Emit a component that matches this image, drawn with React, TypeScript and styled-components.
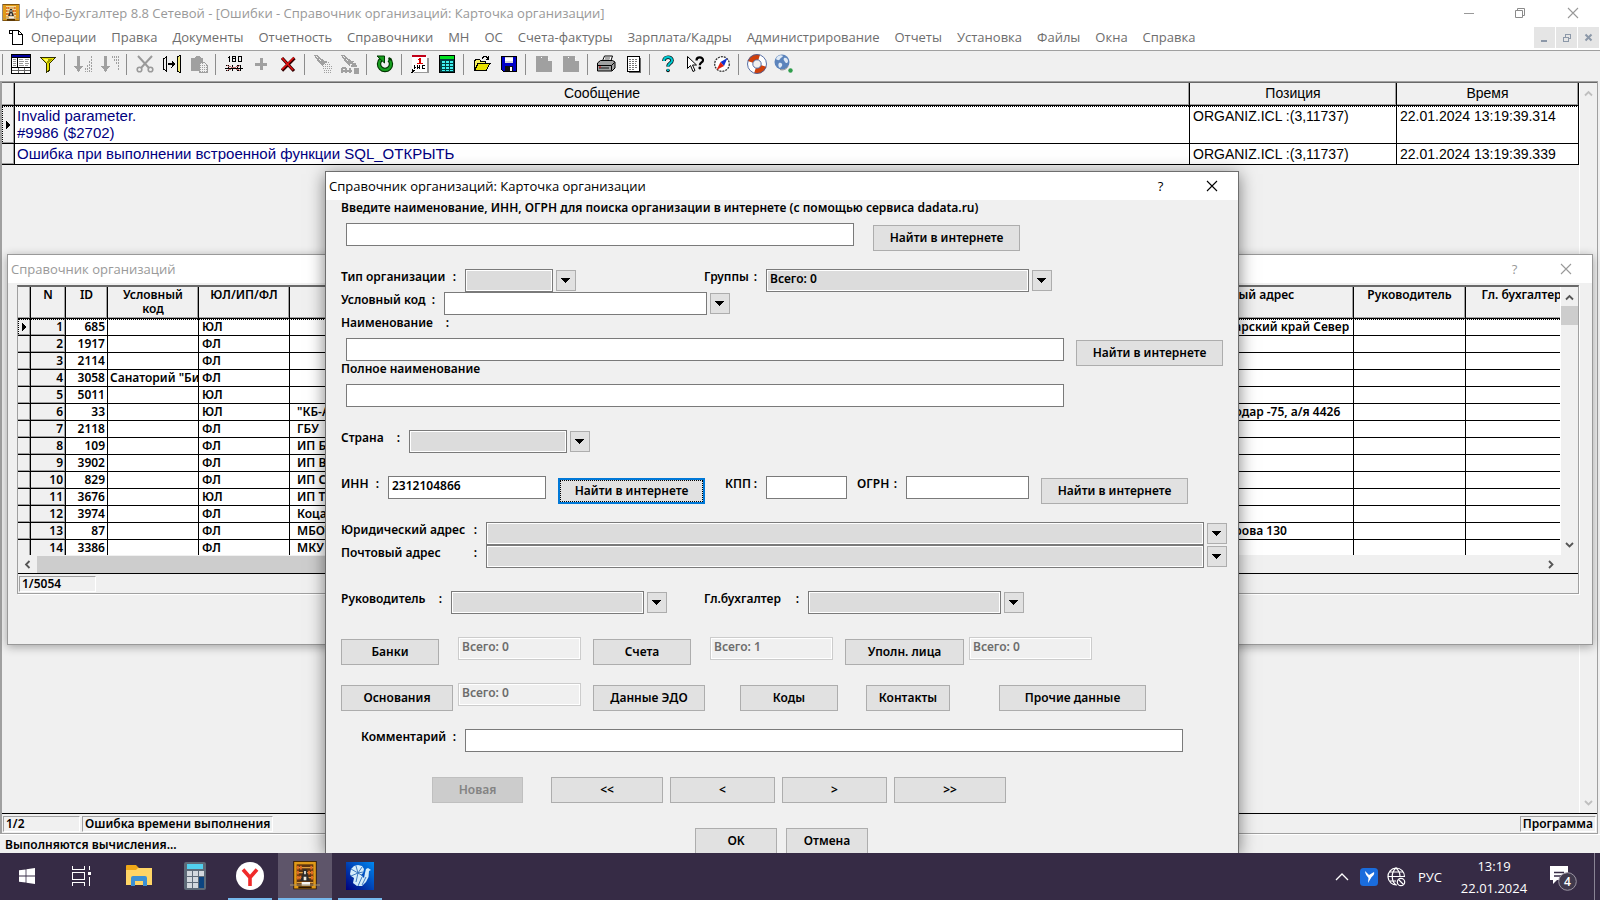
import React from 'react';
import styled, { createGlobalStyle, css } from 'styled-components';

const UI = '"Open Sans", "Noto Sans", sans-serif';
const BOLD = '"Noto Sans", "Open Sans", sans-serif';
const GRID = '"Liberation Sans", Arial, sans-serif';

const GlobalStyle = createGlobalStyle`
  *, *::before, *::after { box-sizing: border-box; }
  html, body { margin: 0; height: 100%; overflow: hidden; }
  #root { height: 100%; }
  button, input, select { margin: 0; font: inherit; color: inherit; border-radius: 0; }
`;

/* ---------- shell ---------- */

const Desktop = styled.div`
  display: flex;
  flex-direction: column;
  height: 100vh;
  background: #f0f0f0;
  color: #000;
  font: 600 12px/16px ${BOLD};
`;

const AppWindow = styled.div`
  position: relative;
  flex: 1;
  min-height: 0;
  display: flex;
  flex-direction: column;
  overflow: hidden;
`;

const TitleBar = styled.header`
  display: flex;
  align-items: center;
  height: 26px;
  padding-left: 2px;
  background: #fff;
  color: #999;
  font: 400 13px/18px ${UI};
`;

const TitleText = styled.h1<{ $gap?: number }>`
  flex: 1;
  margin: 0 0 0 ${(p) => p.$gap ?? 0}px;
  font: inherit;
  white-space: nowrap;
`;

const CaptionButton = styled.button<{ $w?: number }>`
  display: flex;
  align-items: center;
  justify-content: center;
  width: ${(p) => p.$w ?? 51}px;
  height: 24px;
  padding: 0;
  border: 0;
  background: transparent;
`;

const MenuBar = styled.nav`
  display: flex;
  align-items: center;
  height: 25px;
  padding: 0 0 2px 8px;
  border-bottom: 1px solid #a0a0a0;
  background: #fff;
  color: #6d6d6d;
  font: 400 13px/18px ${UI};
`;

const MenuList = styled.div`
  display: flex;
  flex: 1;
  gap: 15px;
  margin-left: 7px;
`;

const MenuItem = styled.button`
  padding: 0;
  border: 0;
  background: transparent;
  white-space: nowrap;
`;

const MdiButton = styled.button`
  display: flex;
  align-items: center;
  justify-content: center;
  width: 21px;
  height: 21px;
  margin-right: 1px;
  padding: 0;
  border: 0;
  background: #e5e5e5;
`;

const ToolBar = styled.div`
  display: flex;
  align-items: center;
  height: 30px;
  padding-bottom: 4px;
`;

const ToolButton = styled.button`
  display: flex;
  align-items: center;
  justify-content: center;
  width: 27px;
  height: 24px;
  padding: 0 2px 0 0;
  border: 0;
  background: transparent;
`;

const Separator = styled.i`
  width: 8px;
  height: 21px;
  background: linear-gradient(#8c8c8c, #8c8c8c) 2px 0 / 1px 100% no-repeat;
`;

const Workspace = styled.main`
  position: relative;
  flex: 1;
  min-height: 0;
  display: flex;
  flex-direction: column;
  margin-right: 2px;
  border: solid #a0a0a0;
  border-width: 1px 1px 1px 2px;
  box-shadow: inset 0 1px #696969;
  padding-top: 1px;
`;

const StatusLine = styled.footer`
  height: 19px;
  padding: 2px 5px 0;
  border-top: 1px solid #fff;
`;

const StatusStrip = styled.div`
  display: flex;
  justify-content: space-between;
  height: 20px;
  padding: 2px 1px 2px 1px;
  border-top: 1px solid #000;
`;

const StatusGroup = styled.div`
  display: flex;
  gap: 2px;
`;

const StatusCell = styled.div<{ $w?: number }>`
  width: ${(p) => (p.$w ? `${p.$w}px` : 'auto')};
  height: 16px;
  padding: 0 2px;
  border: 1px solid #a0a0a0;
  border-right-color: #fff;
  border-bottom-color: #fff;
  line-height: 14px;
  white-space: nowrap;
`;

/* ---------- grids ---------- */

const GridArea = styled.div`
  flex: 1;
  min-height: 0;
  display: flex;
`;

const GridViewport = styled.div`
  flex: 1;
  min-width: 0;
  overflow: hidden;
`;

const VScroll = styled.div`
  display: flex;
  flex-direction: column;
  align-items: center;
  width: 18px;
  padding: 6px 0;
  border-left: 1px solid #fff;
`;

const VThumb = styled.div`
  width: 17px;
  height: 19px;
  margin-top: 4px;
  background: #cdcdcd;
`;

const Fill = styled.div`
  flex: 1;
`;

const ErrorTable = styled.table`
  width: 100%;
  table-layout: fixed;
  border-collapse: separate;
  border-spacing: 0;
  font: 400 14px/17px ${GRID};

  th, td {
    padding: 2px 3px 0;
    border: solid #000;
    border-width: 0 1px 1px 0;
    text-align: left;
    vertical-align: top;
    white-space: pre;
  }
  th {
    height: 23px;
    background: #f0f0f0;
    font-weight: 400;
    text-align: center;
    box-shadow: inset -1px -1px #a0a0a0;
  }
  td { background: #fff; }
`;

const handleCell = css`
  &&& {
    padding: 0;
    background: #f0f0f0;
    box-shadow: inset -1px -1px #a0a0a0;
    text-align: center;
    vertical-align: middle;
  }
`;

const HandleCell = styled.td`
  ${handleCell}
`;

const ErrorRow = styled.tr<{ $h: number; $current?: boolean }>`
  height: ${(p) => p.$h}px;
  ${(p) =>
    p.$current &&
    css`
      outline: 1px dotted #000;
      outline-offset: -1px;
    `}
`;

const Message = styled.td`
  &&& {
    padding-top: 1px;
    padding-left: 2px;
  }
  color: #000080;
  font-size: 15px;
`;

const OrgTable = styled.table`
  width: calc(100% + 18px);
  table-layout: fixed;
  border-collapse: separate;
  border-spacing: 0;

  th, td {
    height: 17px;
    padding: 0 3px;
    border: solid #000;
    border-width: 0 1px 1px 0;
    text-align: left;
    vertical-align: top;
    white-space: nowrap;
    overflow: hidden;
  }
  th {
    height: 32px;
    padding: 1px 0 0;
    background: #f0f0f0;
    box-shadow: inset -1px -1px #a0a0a0;
    font-weight: 600;
    line-height: 14px;
    text-align: center;
    white-space: pre;
  }
  td { background: #fff; }
  td:nth-child(4) { padding: 0 0 0 2px; }
  td:nth-child(6) { padding-left: 7px; }
`;

const OrgRow = styled.tr<{ $current?: boolean }>`
  ${(p) =>
    p.$current &&
    css`
      outline: 1px dotted #000;
      outline-offset: -1px;
    `}
`;

const NumberCell = styled.td<{ $fixed?: boolean }>`
  &&& {
    padding-right: 2px;
    text-align: right;
    ${(p) => p.$fixed && 'background: #f0f0f0; box-shadow: inset -1px -1px #a0a0a0;'}
  }
`;

/* ---------- MDI child ---------- */

const ChildWindow = styled.section`
  position: absolute;
  top: 172px;
  left: 5px;
  right: 4px;
  height: 391px;
  display: flex;
  flex-direction: column;
  border: 1px solid #999;
  background: #f0f0f0;
  box-shadow: 0 2px 9px rgba(0, 0, 0, 0.32);
`;

const ChildTitle = styled.header`
  display: flex;
  align-items: center;
  height: 28px;
  padding: 0 1px 0 3px;
  background: #fff;
  color: #999;
  font: 400 13px/18px ${UI};
`;

const ChildFrame = styled.div`
  display: flex;
  flex-direction: column;
  height: 309px;
  margin: 2px 13px 0 9px;
  border: 1px solid #a0a0a0;
  border-top: 2px solid #696969;
  box-shadow: 1px 1px #fff;
`;

const HScroll = styled.div`
  display: flex;
  align-items: center;
  height: 18px;
  padding: 0 23px 0 5px;
`;

const HThumb = styled.div`
  width: 700px;
  height: 17px;
  margin: 0 auto 0 5px;
  background: #cdcdcd;
`;

/* ---------- dialog ---------- */

const Dialog = styled.section`
  position: absolute;
  top: 171px;
  left: 325px;
  bottom: 0;
  width: 914px;
  border: 1px solid #6e6e6e;
  border-bottom: 0;
  background: #f0f0f0;
  box-shadow: 0 3px 16px rgba(0, 0, 0, 0.5);
  overflow: hidden;
`;

const DialogTitle = styled.header`
  display: flex;
  align-items: center;
  height: 28px;
  padding: 0 1px 0 3px;
  background: #fff;
  font: 400 13px/18px ${UI};
`;

const Form = styled.form`
  padding-left: 15px;
`;

const Row = styled.div<{ $skip?: number; $indent?: number }>`
  display: flex;
  align-items: flex-start;
  height: 23px;
  margin-top: ${(p) => (p.$skip ?? 0) * 23}px;
  padding-left: ${(p) => p.$indent ?? 0}px;
  white-space: nowrap;
`;

const Footer = styled(Row)`
  margin-top: 28px;
`;

const Caption = styled.label<{ $w?: number; $gap?: number }>`
  display: flex;
  justify-content: space-between;
  width: ${(p) => (p.$w ? `${p.$w}px` : 'auto')};
  margin-left: ${(p) => p.$gap ?? 0}px;
  padding-right: 9px;
  line-height: 16px;
`;

const TextInput = styled.input<{ $w: number; $gap?: number }>`
  width: ${(p) => p.$w}px;
  height: 23px;
  margin-left: ${(p) => p.$gap ?? 0}px;
  padding: 0 3px 4px;
  border: 1px solid #7a7a7a;
  background: #fff;
  outline: 0;

  &:disabled {
    border-color: #ccc;
    background: #f0f0f0;
    box-shadow: inset 0 0 0 1px #fff;
    color: #6d6d6d;
  }
`;

const PickField = styled.select<{ $w: number }>`
  appearance: none;
  width: ${(p) => p.$w}px;
  height: 23px;
  padding: 0 3px 4px;
  border: 1px solid #7a7a7a;
  background: #dcdcdc;
  box-shadow: inset 0 0 0 1px #fff;
  outline: 0;
`;

const PickButton = styled.button`
  display: flex;
  align-items: center;
  justify-content: center;
  width: 20px;
  height: 21px;
  margin: 1px 0 0 3px;
  padding: 0 1px 0 0;
  border: 1px solid #adadad;
  background: #e1e1e1;
`;

const PushButton = styled.button<{ $w: number; $gap?: number; $focused?: boolean }>`
  flex: none;
  width: ${(p) => p.$w}px;
  height: 26px;
  margin: 2px 0 0 ${(p) => p.$gap ?? 0}px;
  padding: 0;
  border: 1px solid #adadad;
  background: #e1e1e1;
  line-height: 16px;
  ${(p) =>
    p.$focused &&
    css`
      border: 2px solid #0078d7;
      outline: 1px dotted #000;
      outline-offset: -3px;
    `}

  &:disabled {
    border-color: #bfbfbf;
    background: #ccc;
    color: #838383;
  }
`;

/* ---------- task bar ---------- */

const TaskBar = styled.footer`
  display: flex;
  align-items: stretch;
  height: 47px;
  background: #362b45;
  color: #fff;
  font: 400 13px/22px ${UI};
`;

const TaskButton = styled.button<{ $active?: boolean; $running?: boolean; $w?: number }>`
  display: flex;
  align-items: center;
  justify-content: center;
  width: ${(p) => p.$w ?? 55}px;
  padding: 0 0 2px;
  border: 0;
  background: transparent;
  ${(p) =>
    p.$running &&
    css`
      background: linear-gradient(#76b9ed, #76b9ed) center bottom / ${p.$active ? '100%' : '44px'} 2px no-repeat
        ${p.$active ? '#5e556a' : 'transparent'};
    `}
`;

const Tray = styled.div`
  display: flex;
  align-items: center;
  margin-left: auto;
`;

const TrayButton = styled.button<{ $w: number }>`
  display: flex;
  align-items: center;
  justify-content: center;
  width: ${(p) => p.$w}px;
  height: 47px;
  padding: 0;
  border: 0;
  background: transparent;
`;

const Clock = styled.time`
  width: 86px;
  text-align: center;
`;

const ShowDesktop = styled.button`
  width: 6px;
  height: 47px;
  margin-left: 5px;
  padding: 0;
  border: 0;
  border-left: 1px solid #8a8494;
  background: transparent;
`;

/* ---------- icons ---------- */

type IconProps = { s?: number; h?: number; box?: string; crisp?: boolean; children: React.ReactNode };
const Icon = ({ s = 20, h, box, crisp, children }: IconProps) => (
  <svg width={s} height={h ?? s} viewBox={box ?? `0 0 ${s} ${h ?? s}`} fill="none" shapeRendering={crisp ? 'crispEdges' : 'auto'} aria-hidden>
    {children}
  </svg>
);

const Abacus = ({ s = 18, tall }: { s?: number; tall?: boolean }) => (
  <Icon s={s} box="0 0 18 18">
    <rect x={tall ? 2 : 0.5} y="0" width={tall ? 14 : 17} height="17" fill="#2a1400" />
    <rect x={tall ? 2.500 : 1} y="0.500" width={tall ? 13 : 16} height="16" fill="#e09a18" />
    <rect x="4" y="2" width="10" height="13" fill={tall ? '#5c3310' : '#f4dc9c'} />
    <path d="M4 4h10M4 7h10M4 10h10M4 13h10" stroke={tall ? '#e0a040' : '#b06010'} strokeWidth=".7" />
    <path d="M4.700 2.900v2.200M6.500 2.900v2.200M12.800 2.900v2.200M4.700 5.900v2.200M11.500 5.900v2.200M13.200 5.900v2.200M4.700 8.900v2.200M6.200 8.900v2.200M13.200 8.900v2.200" stroke="#e06a20" strokeWidth="1.200" />
    <path d="M8 5h2l.6 3.500L12 12H6l1.400-3.500z" fill="#2c2c2c" />
    <path d="M8.500 6h1v2h-1zM8.200 9.500h1.600v2H8.200z" fill="#f0ece0" />
    <path d="M7 12.600h5v2.200H7z" fill="#f4f4f4" />
    <path d="M0 14.400h18" stroke="#a8946c" strokeWidth=".6" />
    <path d="M5 15.800h8" stroke="#2a1400" strokeWidth="1.200" />
  </Icon>
);

const Minimize = () => <Icon s={12}><path d="M1 6.500h10" stroke="#999" /></Icon>;
const Restore = () => (
  <Icon s={12}><path d="M1.500 3.500h7v7h-7zM3.500 3.500v-2h7v7h-2" stroke="#8a8a8a" /></Icon>
);
const Close = ({ c = '#999' }: { c?: string }) => (
  <Icon s={12}><path d="M1 1l10 10M11 1L1 11" stroke={c} strokeWidth="1.100" /></Icon>
);

const PageIcon = () => (
  <Icon s={16} crisp>
    <path d="M5 1h6l4 4v10H4V4" fill="#fff" />
    <path d="M1.500 4v-2.500h9l4 4V15.500H4.500V1.500M10.500 1.500V5.500h4M1 4.500h3" stroke="#000" />
  </Icon>
);

const RowArrow = () => <Icon s={4} h={8} crisp><path d="M0 0l4 4-4 4z" fill="#000" /></Icon>;
const DownArrow = () => <Icon s={9} h={5} crisp><path d="M0 0h9L4.500 5z" fill="#000" /></Icon>;

const Chevron = ({ dir, c }: { dir: 'up' | 'down' | 'left' | 'right'; c: string }) => {
  const d = { up: 'M1 6.500L4.500 3 8 6.500', down: 'M1 3L4.500 6.500 8 3', left: 'M6.500 1L3 4.500 6.500 8', right: 'M3 1l3.500 3.500L3 8' }[dir];
  return <Icon s={9}><path d={d} stroke={c} strokeWidth="1.800" /></Icon>;
};

const TableIcon = () => (
  <Icon crisp>
    <path d="M.5.500h19v19H.5z" fill="#fff" stroke="#000" />
    <path d="M1 1h18v2H1z" fill="#0000a0" />
    <path d="M1 3.500h18M6.500 3v10M1 13.500h18" stroke="#000" />
    <path d="M1 16.500h18M7.500 14v5M13.500 14v5" stroke="#666" />
    <path d="M2 5.500h3M2 7.500h3M2 9.500h3M2 11.500h3M8 5.500h4M14 5.500h4M8 7.500h5M14 7.500h3M8 9.500h4M14 9.500h4M8 11.500h5M14 11.500h3" stroke="#999" />
  </Icon>
);

const Funnel = () => (
  <Icon s={18} crisp>
    <path d="M1.500 2.500h15l-6 6v7l-3 1.500v-8.500z" fill="#e8e000" stroke="#303000" />
    <path d="M4 4h10l-5 4z" fill="#a0a000" /><path d="M4 4h5l-1 4z" fill="#ffff60" />
  </Icon>
);

const Sort = ({ down }: { down?: boolean }) => (
  <Icon s={18} crisp>
    <path d="M3 1h3v10h3l-4.500 6L0 11h3z" fill="#a0a0a0" />
    <path
      d={down ? 'M11.500 1v2M13.500 1v5M15.500 1v8M17.500 1v15' : 'M11.500 13v4M13.500 10v7M15.500 6v11M17.500 1v16'}
      stroke="#a0a0a0"
      strokeDasharray="2 1"
    />
  </Icon>
);

const Scissors = () => (
  <Icon s={18}>
    <path d="M2 1l11 12M16 1L5 13" stroke="#9a9a9a" strokeWidth="2" />
    <circle cx="3.500" cy="14.500" r="2.300" stroke="#9a9a9a" strokeWidth="1.600" />
    <circle cx="14.500" cy="14.500" r="2.300" stroke="#9a9a9a" strokeWidth="1.600" />
  </Icon>
);

const Transfer = () => (
  <Icon s={18} crisp>
    <path d="M3.500 1.500L.5 4v10l3 2.500z" fill="#eee" stroke="#000" />
    <path d="M14.500 1.500L17 .5v17l-2.500-1.500z" fill="#f0e878" stroke="#000" />
    <path d="M5 9h4" stroke="#000" strokeWidth="2" /><path d="M8.500 5.500l4.500 3.500-4.500 3.500z" fill="#000" />
    <path d="M17.500 2v14" stroke="#000" strokeDasharray="1 1" />
  </Icon>
);

const Paste = () => (
  <Icon s={18} crisp>
    <path d="M1 3h3l2-2h3l2 2h2v13H1z" fill="#a0a0a0" />
    <path d="M9 7h6l3 3v8H9z" fill="#f0f0f0" />
    <path d="M10 8.500h4M10 10.500h7M10 12.500h7M10 14.500h7M10 16.500h7" stroke="#a0a0a0" strokeDasharray="1 1" />
    <path d="M9.500 7.500h5l3 3v7h-8z" stroke="#a0a0a0" />
  </Icon>
);

const Numbers = () => (
  <Icon crisp>
    <path d="M5.500 2v6M4 3.500h1M8.500 2.500h3v5h-3zM8 4.500h4M14.500 2.500h3v5h-3z" stroke="#000" />
    <path d="M2 11.500h3M4.500 11v6M2 14.500h3M2 16.500h3M8.500 11v6M7 14.500h4M13.500 11.500h3v5h-3z" stroke="#000" />
    <path d="M3 16.500l13-5M3 11.500l13 5" stroke="#c07070" />
    <path d="M1 14h18" stroke="#000" />
  </Icon>
);

const Plus = () => <Icon s={12} crisp><path d="M6 0v12M0 6h12" stroke="#a0a0a0" strokeWidth="3" /></Icon>;
const RedCross = () => (
  <Icon s={18}>
    <path d="M3 3l12 13M15.500 3L3 15.500" stroke="#300" strokeWidth="3.200" />
    <path d="M3 3l11 12M15 2.500L3 14.500" stroke="#e01010" strokeWidth="1.700" />
  </Icon>
);

const Torch = ({ text }: { text?: boolean }) => (
  <Icon s={20} crisp>
    <path d="M1 1l3 0 5 4 2 2 3 0-1 2-3 1 0 3-2-2-3-3z" fill="#a0a0a0" />
    <path d="M3 2l6 6" stroke="#f0f0f0" strokeDasharray="1 1" />
    {text ? (
      <path d="M2 19v-4l1-1h2l1 1v4M2 16.500h4M7 16.500h5M9.500 14v5M14.500 14v5M14 14.500h4v4h-4M14 16.500h4M12 9.500h4M11 11.500h6" stroke="#a0a0a0" strokeWidth="2" />
    ) : (
      <path d="M11 8.500h6M10 10.500h8M10 12.500h9M10 14.500h9M11 16.500h8M11 18.500h8" stroke="#a0a0a0" strokeDasharray="1 1" />
    )}
  </Icon>
);

const Refresh = () => (
  <Icon s={18}>
    <path d="M5 4.500a6 6 0 1 0 8 0" stroke="#003800" strokeWidth="4.400" />
    <path d="M5 4.500a6 6 0 1 0 8 0" stroke="#18a020" strokeWidth="2.200" />
    <path d="M1 1h7.500v7z" fill="#18a020" stroke="#003800" /><path d="M13 2l3 2-2 2-2-2z" fill="#003800" />
  </Icon>
);

const Calendar = () => (
  <Icon s={18} crisp>
    <path d="M1 1h15v16H1z" fill="#fff" /><path d="M1 0h14v2H1z" fill="#c00018" />
    <path d="M16.500 3v14.500H3" stroke="#999" strokeWidth="2" />
    <path d="M8 3h2v6H7V8h1V5H7V4h1z" fill="#d00" /><path d="M6 8h6v1H6z" fill="#d00" />
    <path d="M3 10v4M5 12h-2M6.500 10v4M8.500 10v4M6.500 12h2M11 10v4M11 10.500h3M11 13.500h3M1.500 14v3M3.500 15l-3 3" stroke="#000" />
  </Icon>
);

const CalcIcon = () => (
  <Icon s={18} crisp>
    <path d="M2 1h14v16H2z" fill="#004040" /><path d="M2 1h14v3H2z" fill="#00e020" />
    {[6, 9, 12].map((y) => [4, 8, 12].map((x) => <rect key={`${x}-${y}`} x={x} y={y} width="3" height="2" fill="#40f0f0" />))}
    <path d="M4 15.500h12" stroke="#40f0f0" strokeDasharray="3 1" /><path d="M1.500.500h15v17h-15z" stroke="#000" />
  </Icon>
);

const OpenFolder = () => (
  <Icon s={18} crisp>
    <path d="M1.500 15.500v-10l2-1h3l1 1.500h5V8" fill="#f8f060" stroke="#000" />
    <path d="M1.500 15.500L5 8.500h12l-4 7z" fill="#e8e000" stroke="#000" />
    <path d="M9 3.500c2-3 4-2.500 6 0M15.500 1v3h-3" stroke="#000" />
  </Icon>
);

const Floppy = () => (
  <Icon s={18} crisp>
    <path d="M1.500 1.500h15v15h-13l-2-2z" fill="#0000c8" stroke="#000" />
    <path d="M5 2h8v6H5z" fill="#d8d8d8" /><path d="M5 3h8v3H5z" fill="#fff" />
    <path d="M5 11h8v5H5z" fill="#101010" /><path d="M10 12h2v4h-2z" fill="#fff" />
  </Icon>
);

const GreyBlock = () => (
  <Icon s={18} crisp>
    <path d="M1 1h12v5h4v11H1z" fill="#a0a0a0" /><path d="M6 2h1v1H6zM13 3h1v1h-1z" fill="#fff" />
  </Icon>
);

const Printer = () => (
  <Icon s={20}>
    <path d="M6 8l2.500-6h8L14.500 8z" fill="#fff" stroke="#000" />
    <path d="M9 4h5M8.500 6h5" stroke="#555" />
    <path d="M1.500 9l3-2.500h12l2.500 1.500v6l-3 3H1.500z" fill="#a0a0a0" stroke="#000" />
    <path d="M1.500 11.500h14l3-3M15.500 11.500v5" stroke="#000" /><path d="M3 14h10" stroke="#404040" strokeWidth="1.500" />
    <path d="M3 13h2" stroke="#d00" />
  </Icon>
);

const ListPage = () => (
  <Icon s={18} crisp>
    <path d="M3.500 1.500h12v15h-12z" fill="#fff" stroke="#000" />
    <path d="M5 4.500h8M5 6.500h9M5 8.500h7M5 10.500h9M5 12.500h8M5 14.500h5" stroke="#777" strokeDasharray="2 1" />
    <path d="M16.500 3v14.500H5" stroke="#666" />
  </Icon>
);

const Question = () => (
  <Icon s={18}>
    <path d="M5 6c0-5 8-5 8-.5 0 3-4 2.500-4 6" stroke="#000" strokeWidth="3.600" />
    <path d="M5 6c0-5 8-5 8-.5 0 3-4 2.500-4 6" stroke="#00c8d0" strokeWidth="2.200" />
    <circle cx="9" cy="15.500" r="1.800" fill="#000" /><circle cx="9" cy="15.200" r="1.100" fill="#00c8d0" />
  </Icon>
);

const WhatsThis = () => (
  <Icon s={18}>
    <path d="M1.500 1.500v12l3-3 2.500 6 2-1-2.500-5.500h4z" fill="#fff" stroke="#000" />
    <path d="M10.500 5.500c0-4 6.500-4 6.500-.3 0 2.300-3.200 2.300-3.200 5" stroke="#000" strokeWidth="2.200" />
    <circle cx="13.800" cy="13" r="1.400" fill="#000" />
  </Icon>
);

const Compass = () => (
  <Icon s={18}>
    <circle cx="9" cy="9" r="7.300" fill="#fff" stroke="#333" strokeDasharray="2 1" strokeWidth="1.300" />
    <path d="M14.500 3L11 11 7.500 7z" fill="#1030d0" /><path d="M3.500 15L7.500 7l3.500 4z" fill="#e02010" />
  </Icon>
);

const LifeBuoy = () => (
  <Icon s={20}>
    <circle cx="10" cy="10" r="7" stroke="#fff" strokeWidth="5.500" />
    <circle cx="10" cy="10" r="7" stroke="#d0400c" strokeWidth="5.500" strokeDasharray="11 11" strokeDashoffset="-2" />
    <circle cx="10" cy="10" r="9.500" stroke="#44609c" strokeWidth=".9" />
    <circle cx="10" cy="10" r="4.200" stroke="#44609c" strokeWidth=".9" />
  </Icon>
);

const GlobeNet = () => (
  <Icon s={20}>
    <circle cx="8" cy="8" r="7.500" fill="#5c84bc" />
    <path d="M3 3c2-2 5-2 6-1-1 2-2 1-3 3s-3 1-4 0zM10 4c2-1 4 1 4 3s-2 3-3 1-2-2-1-4zM5 9c2-1 4 1 3 3l-2 2c-2-1-2-4-1-5z" fill="#dfeaf6" />
    <path d="M6 15.500c3 1 6 0 8-3" stroke="#888" /><circle cx="16.500" cy="16.500" r="2.200" fill="#2f9e4c" />
  </Icon>
);

const StartIcon = () => (
  <Icon s={16}><path d="M0 2.300L6.600 1.400v6.200H0zM7.400 1.300L16 0v7.600H7.400zM0 8.400h6.600v6.200L0 13.700zM7.400 8.400H16V16l-8.600-1.200z" fill="#fff" /></Icon>
);
const TaskView = () => (
  <Icon s={22} h={20} crisp>
    <path d="M1.500 0v3.500h12V0M1.500 6.500h12v7h-12zM1.500 20v-3.500h12V20M18.500 0v4M18.500 11v9" stroke="#fff" />
    <path d="M17 6h3v3h-3z" fill="#fff" />
  </Icon>
);
const Explorer = () => (
  <Icon s={26} h={21}>
    <path d="M0 1a1 1 0 0 1 1-1h9l3 3h12a1 1 0 0 1 1 1v16H0z" fill="#f0a818" />
    <path d="M0 5l10 0 2-2h14v17H0z" fill="#ffd566" />
    <path d="M5 21v-8a2 2 0 0 1 2-2h12a2 2 0 0 1 2 2v8h-4v-5H9v5z" fill="#3c90d4" />
  </Icon>
);
const TaskCalc = () => (
  <Icon s={22} h={28}>
    <rect width="22" height="28" rx="2" fill="#5e6a78" /><rect x="3" y="2" width="16" height="5" fill="#52d0ee" />
    {[9, 15, 21].map((y) => [3, 9, 15].map((x) => (
      <rect key={`${x}-${y}`} x={x} y={y} width="5" height="5" fill="#d3d8de" />
    )))}
    <rect x="15" y="15" width="5" height="11" fill="#0c4480" />
  </Icon>
);
const Yandex = () => (
  <Icon s={28}>
    <circle cx="14" cy="14" r="14" fill="#fff" />
    <path d="M7 7.500l7 8 7-8M14 15v9" stroke="#f02a2a" strokeWidth="3.600" />
  </Icon>
);
const Bird = () => (
  <Icon s={28}>
    <defs><linearGradient id="sky" x1="0" y1="1" x2="1" y2="0"><stop stopColor="#00007c" /><stop offset="1" stopColor="#0088f0" /></linearGradient></defs>
    <rect width="28" height="28" fill="url(#sky)" />
    <path d="M4 12L5 7l3-3 4-1 4 1 2 3-1 4-2 2 3 3 1-5 1-4 2-1 3 2-2 1-.5 6-2.500 5-4 4h-5l-4-3 1-5-3-2z" fill="#d4ecfa" />
    <path d="M12 11L5 7M12 11L10 4M12 11l4-6M12 11l-7 3M12 11l5 3M12 11l-2 9M12 11l5-1M16 15l-4 9M20 15l-4 8" stroke="#2c6cb8" strokeWidth=".9" />
  </Icon>
);
const TrayChevron = () => <Icon s={14} h={8}><path d="M1 7l6-6 6 6" stroke="#fff" strokeWidth="1.300" /></Icon>;
const TrayBird = () => (
  <Icon s={18}><rect width="18" height="18" rx="3.500" fill="#1a6cdc" /><path d="M5 3l4 4 5-3c1 3-2 4-3 6l-3 5 .5-5C7 8 5 6 5 3z" fill="#fff" /></Icon>
);
const TrayGlobe = () => (
  <Icon s={20}>
    <path d="M10 1a8.500 8.500 0 1 0 1 17M18.500 10A8.500 8.500 0 0 0 10 1M10 1c-5 4-5 13 0 17M10 1c3 2.500 4 5.500 4 8.500M1.500 9.500h17M3 5h14M3 14h7" stroke="#fff" strokeWidth="1.200" />
    <circle cx="15" cy="15" r="3.700" stroke="#fff" strokeWidth="1.200" /><path d="M12.500 12.500l5 5" stroke="#fff" strokeWidth="1.200" />
  </Icon>
);
const Notice = () => (
  <Icon s={28}>
    <path d="M1 3h18v14H8l-4 4v-4H1z" fill="#fff" /><path d="M5 9.500h10M5 13h10" stroke="#362b45" strokeWidth="1.300" />
    <circle cx="18.500" cy="18.500" r="8.800" fill="#40394c" stroke="#9a94a2" />
    <text x="18.500" y="23" fill="#fff" fontSize="12" fontFamily="Open Sans, sans-serif" fontWeight="600" textAnchor="middle">4</text>
  </Icon>
);

/* ---------- data ---------- */

const menus = ['Операции', 'Правка', 'Документы', 'Отчетность', 'Справочники', 'МН', 'ОС', 'Счета-фактуры', 'Зарплата/Кадры', 'Администрирование', 'Отчеты', 'Установка', 'Файлы', 'Окна', 'Справка'];

const toolGroups: [string, React.ReactNode][][] = [
  [['Таблица', <TableIcon />], ['Фильтр', <Funnel />]],
  [['По возрастанию', <Sort />], ['По убыванию', <Sort down />]],
  [['Вырезать', <Scissors />], ['Перенести', <Transfer />], ['Вставить', <Paste />]],
  [['Номера', <Numbers />], ['Добавить', <Plus />], ['Удалить', <RedCross />]],
  [['Найти', <Torch />], ['Заменить', <Torch text />]],
  [['Обновить', <Refresh />]],
  [['Календарь', <Calendar />], ['Калькулятор', <CalcIcon />]],
  [['Открыть', <OpenFolder />], ['Сохранить', <Floppy />]],
  [['Блок 1', <GreyBlock />], ['Блок 2', <GreyBlock />]],
  [['Печать', <Printer />], ['Просмотр', <ListPage />]],
  [['Помощь', <Question />], ['Что это', <WhatsThis />], ['Навигатор', <Compass />]],
  [['Поддержка', <LifeBuoy />], ['Интернет', <GlobeNet />]],
];

const errors = [
  { text: 'Invalid parameter.\n#9986 ($2702)', at: 'ORGANIZ.ICL :(3,11737)', time: '22.01.2024 13:19:39.314', h: 38 },
  { text: 'Ошибка при выполнении встроенной функции SQL_ОТКРЫТЬ', at: 'ORGANIZ.ICL :(3,11737)', time: '22.01.2024 13:19:39.339', h: 21 },
];

type Org = [id: number, code: string, kind: string, name: string, address: string];
const orgs: Org[] = [
  [685, '', 'ЮЛ', '', '353240 Краснодарский край Север'],
  [1917, '', 'ФЛ', '', ''],
  [2114, '', 'ФЛ', '', ''],
  [3058, 'Санаторий "Би', 'ФЛ', '', ''],
  [5011, '', 'ЮЛ', '', ''],
  [33, '', 'ЮЛ', '"КБ-Агро"', '350075, г. Краснодар -75, а/я 4426'],
  [2118, '', 'ФЛ', 'ГБУ', ''],
  [109, '', 'ФЛ', 'ИП Б', ''],
  [3902, '', 'ФЛ', 'ИП В', ''],
  [829, '', 'ФЛ', 'ИП С', ''],
  [3676, '', 'ЮЛ', 'ИП Т', ''],
  [3974, '', 'ФЛ', 'Коца', ''],
  [87, '', 'ФЛ', 'МБОУ', 'г. Ейск, ул. С. Кирова 130'],
  [3386, '', 'ФЛ', 'МКУ', ''],
];

/* ---------- parts ---------- */

const FIND = 'Найти в интернете';

type PickProps = { id: string; label: string; labelWidth: number; width: number; gap?: number; value?: string };
const Pick = ({ id, label, labelWidth, width, gap, value = '' }: PickProps) => (
  <>
    <Caption htmlFor={id} $w={labelWidth} $gap={gap}><span>{label}</span><span>:</span></Caption>
    <PickField id={id} $w={width}><option>{value}</option></PickField>
    <PickButton type="button" aria-label={`${label}: выбрать`}><DownArrow /></PickButton>
  </>
);

const ErrorsGrid = () => (
  <GridArea>
    <GridViewport>
      <ErrorTable>
        <colgroup><col style={{ width: 13 }} /><col /><col style={{ width: 207 }} /><col style={{ width: 182 }} /></colgroup>
        <thead><tr><th /><th>Сообщение</th><th>Позиция</th><th>Время</th></tr></thead>
        <tbody>
          {errors.map((e, i) => (
            <ErrorRow key={e.time} $h={e.h} $current={i === 0}>
              <HandleCell>{i === 0 && <RowArrow />}</HandleCell>
              <Message>{e.text}</Message><td>{e.at}</td><td>{e.time}</td>
            </ErrorRow>
          ))}
        </tbody>
      </ErrorTable>
    </GridViewport>
    <VScroll><Chevron dir="up" c="#bfbfbf" /><Fill /><Chevron dir="down" c="#bfbfbf" /></VScroll>
  </GridArea>
);

const OrgWindow = () => (
  <ChildWindow>
    <ChildTitle>
      <TitleText as="h2">Справочник организаций</TitleText>
      <CaptionButton>?</CaptionButton>
      <CaptionButton aria-label="Закрыть"><Close /></CaptionButton>
    </ChildTitle>
    <ChildFrame>
      <GridArea>
        <GridViewport>
          <OrgTable>
            <colgroup>
              {[13, 35, 42, 91, 91, 0, 218, 112, 112].map((w, i) => <col key={i} style={w ? { width: w } : undefined} />)}
            </colgroup>
            <thead>
              <tr><th /><th>N</th><th>ID</th><th>{'Условный\nкод'}</th><th>ЮЛ/ИП/ФЛ</th><th /><th>Почтовый адрес</th><th>Руководитель</th><th>Гл. бухгалтер</th></tr>
            </thead>
            <tbody>
              {orgs.map(([id, code, kind, name, address], i) => (
                <OrgRow key={id} $current={i === 0}>
                  <HandleCell>{i === 0 && <RowArrow />}</HandleCell>
                  <NumberCell $fixed>{i + 1}</NumberCell><NumberCell>{id}</NumberCell>
                  <td>{code}</td><td>{kind}</td><td>{name}</td><td>{address}</td><td /><td />
                </OrgRow>
              ))}
            </tbody>
          </OrgTable>
        </GridViewport>
        <VScroll><Chevron dir="up" c="#555" /><VThumb /><Fill /><Chevron dir="down" c="#555" /></VScroll>
      </GridArea>
      <HScroll><Chevron dir="left" c="#555" /><HThumb /><Chevron dir="right" c="#555" /></HScroll>
      <StatusStrip><StatusCell $w={77}>1/5054</StatusCell></StatusStrip>
    </ChildFrame>
  </ChildWindow>
);

const OrgDialog = () => (
  <Dialog role="dialog" aria-labelledby="card-title">
    <DialogTitle>
      <TitleText as="h2" id="card-title">Справочник организаций: Карточка организации</TitleText>
      <CaptionButton>?</CaptionButton>
      <CaptionButton aria-label="Закрыть"><Close c="#000" /></CaptionButton>
    </DialogTitle>
    <Form>
      <Row><Caption htmlFor="search">Введите наименование, ИНН, ОГРН для поиска организации в интернете (с помощью сервиса dadata.ru)</Caption></Row>
      <Row $indent={5}><TextInput id="search" $w={508} /><PushButton type="button" $w={147} $gap={19}>{FIND}</PushButton></Row>
      <Row $skip={1}>
        <Pick id="type" label="Тип организации" labelWidth={124} width={88} />
        <Pick id="groups" label="Группы" labelWidth={62} width={263} gap={128} value="Всего: 0" />
      </Row>
      <Row>
        <Caption htmlFor="code" $w={103}><span>Условный код</span><span>:</span></Caption>
        <TextInput id="code" $w={263} /><PickButton type="button" aria-label="Условный код: выбрать"><DownArrow /></PickButton>
      </Row>
      <Row><Caption htmlFor="name" $w={117}><span>Наименование</span><span>:</span></Caption></Row>
      <Row $indent={5}><TextInput id="name" $w={718} /><PushButton type="button" $w={147} $gap={12}>{FIND}</PushButton></Row>
      <Row><Caption htmlFor="full">Полное наименование</Caption></Row>
      <Row $indent={5}><TextInput id="full" $w={718} /></Row>
      <Row $skip={1}><Pick id="country" label="Страна" labelWidth={68} width={158} /></Row>
      <Row $skip={1}>
        <Caption htmlFor="inn" $w={47}><span>ИНН</span><span>:</span></Caption>
        <TextInput id="inn" $w={158} defaultValue="2312104866" />
        <PushButton type="button" $w={147} $gap={12} $focused>{FIND}</PushButton>
        <Caption htmlFor="kpp" $w={41} $gap={20}><span>КПП</span><span>:</span></Caption>
        <TextInput id="kpp" $w={81} />
        <Caption htmlFor="ogrn" $w={49} $gap={10}><span>ОГРН</span><span>:</span></Caption>
        <TextInput id="ogrn" $w={123} />
        <PushButton type="button" $w={147} $gap={12}>{FIND}</PushButton>
      </Row>
      <Row $skip={1}><Pick id="legal" label="Юридический адрес" labelWidth={145} width={718} /></Row>
      <Row><Pick id="postal" label="Почтовый адрес" labelWidth={145} width={718} /></Row>
      <Row $skip={1}>
        <Pick id="head" label="Руководитель" labelWidth={110} width={193} />
        <Pick id="chief" label="Гл.бухгалтер" labelWidth={104} width={193} gap={37} />
      </Row>
      <Row $skip={1}>
        <PushButton type="button" $w={98}>Банки</PushButton>
        <TextInput aria-label="Банки, всего" disabled defaultValue="Всего: 0" $w={123} $gap={19} />
        <PushButton type="button" $w={98} $gap={12}>Счета</PushButton>
        <TextInput aria-label="Счета, всего" disabled defaultValue="Всего: 1" $w={123} $gap={19} />
        <PushButton type="button" $w={119} $gap={12}>Уполн. лица</PushButton>
        <TextInput aria-label="Лица, всего" disabled defaultValue="Всего: 0" $w={123} $gap={5} />
      </Row>
      <Row $skip={1}>
        <PushButton type="button" $w={112}>Основания</PushButton>
        <TextInput aria-label="Основания, всего" disabled defaultValue="Всего: 0" $w={123} $gap={5} />
        <PushButton type="button" $w={112} $gap={12}>Данные ЭДО</PushButton>
        <PushButton type="button" $w={98} $gap={35}>Коды</PushButton>
        <PushButton type="button" $w={84} $gap={28}>Контакты</PushButton>
        <PushButton type="button" $w={147} $gap={49}>Прочие данные</PushButton>
      </Row>
      <Row $skip={1} $indent={20}>
        <Caption htmlFor="note" $w={104}><span>Комментарий</span><span>:</span></Caption>
        <TextInput id="note" $w={718} />
      </Row>
      <Row $skip={1} $indent={91}>
        <PushButton type="button" $w={91} disabled>Новая</PushButton>
        <PushButton type="button" $w={112} $gap={28}>&lt;&lt;</PushButton>
        <PushButton type="button" $w={105} $gap={7}>&lt;</PushButton>
        <PushButton type="button" $w={105} $gap={7}>&gt;</PushButton>
        <PushButton type="button" $w={112} $gap={7}>&gt;&gt;</PushButton>
      </Row>
      <Footer $indent={354}>
        <PushButton type="button" $w={82}>OK</PushButton>
        <PushButton type="button" $w={82} $gap={9}>Отмена</PushButton>
      </Footer>
    </Form>
  </Dialog>
);

export default function App() {
  return (
    <Desktop>
      <GlobalStyle />
      <AppWindow>
        <TitleBar>
          <Abacus />
          <TitleText $gap={5}>Инфо-Бухгалтер 8.8 Сетевой - [Ошибки - Справочник организаций: Карточка организации]</TitleText>
          <CaptionButton aria-label="Свернуть"><Minimize /></CaptionButton>
          <CaptionButton aria-label="Восстановить"><Restore /></CaptionButton>
          <CaptionButton aria-label="Закрыть" $w={55}><Close /></CaptionButton>
        </TitleBar>
        <MenuBar>
          <PageIcon />
          <MenuList>{menus.map((m) => <MenuItem key={m}>{m}</MenuItem>)}</MenuList>
          <MdiButton aria-label="Свернуть окно"><Icon s={9} crisp><path d="M1 7h6v2H1z" fill="#8c98a8" /></Icon></MdiButton>
          <MdiButton aria-label="Восстановить окно"><Icon s={9} crisp><path d="M1 4h5v4H1zM3 4V1h5v4H6" stroke="#8c98a8" /></Icon></MdiButton>
          <MdiButton aria-label="Закрыть окно"><Icon s={9}><path d="M1.500 1.500l6 6M7.500 1.500l-6 6" stroke="#8c98a8" strokeWidth="2" /></Icon></MdiButton>
        </MenuBar>
        <ToolBar>
          {toolGroups.map((group, g) => (
            <React.Fragment key={g}>
              <Separator />
              {group.map(([name, icon]) => <ToolButton key={name} aria-label={name}>{icon}</ToolButton>)}
            </React.Fragment>
          ))}
        </ToolBar>
        <Workspace>
          <ErrorsGrid />
          <StatusStrip>
            <StatusGroup><StatusCell $w={77}>1/2</StatusCell><StatusCell>Ошибка времени выполнения</StatusCell></StatusGroup>
            <StatusCell>Программа</StatusCell>
          </StatusStrip>
          <OrgWindow />
        </Workspace>
        <StatusLine>Выполняются вычисления...</StatusLine>
        <OrgDialog />
      </AppWindow>
      <TaskBar>
        <TaskButton aria-label="Пуск" $w={54}><StartIcon /></TaskButton>
        <TaskButton aria-label="Представление задач"><TaskView /></TaskButton>
        <TaskButton aria-label="Проводник" $w={60}><Explorer /></TaskButton>
        <TaskButton aria-label="Калькулятор" $w={52}><TaskCalc /></TaskButton>
        <TaskButton aria-label="Браузер" $running $w={57}><Yandex /></TaskButton>
        <TaskButton aria-label="Инфо-Бухгалтер" $running $active $w={54}><Abacus s={30} tall /></TaskButton>
        <TaskButton aria-label="Почта" $running $w={56}><Bird /></TaskButton>
        <Tray>
          <TrayButton aria-label="Скрытые значки" $w={27}><TrayChevron /></TrayButton>
          <TrayButton aria-label="Птица" $w={27}><TrayBird /></TrayButton>
          <TrayButton aria-label="Сеть" $w={27}><TrayGlobe /></TrayButton>
          <TrayButton $w={42}>РУС</TrayButton>
          <Clock dateTime="2024-01-22T13:19">13:19<br />22.01.2024</Clock>
          <TrayButton aria-label="Уведомления" $w={52}><Notice /></TrayButton>
          <ShowDesktop aria-label="Показать рабочий стол" />
        </Tray>
      </TaskBar>
    </Desktop>
  );
}
